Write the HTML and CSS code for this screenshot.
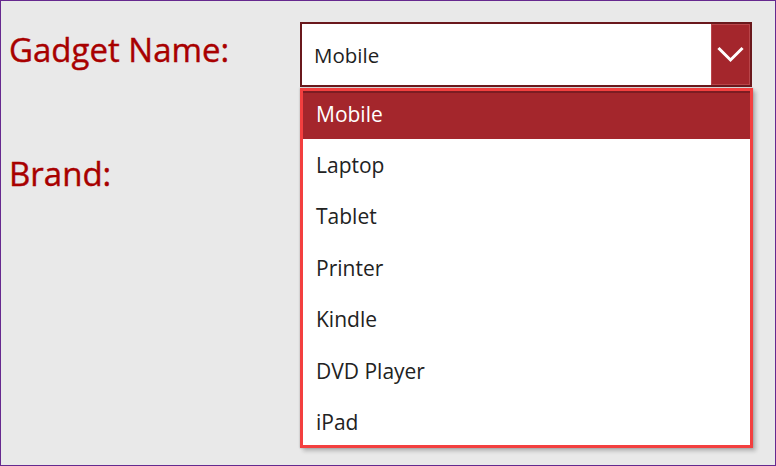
FILE: index.html
```html
<!DOCTYPE html>
<html>
<head>
<meta charset="utf-8">
<link rel="stylesheet" href="styles.css">
</head>
<body>
<div class="frame">
  <div class="form">
    <div class="label label-first">Gadget Name:</div>
    <div class="dropdown">
      <div class="select">
        <span class="value">Mobile</span>
        <span class="chev">
          <svg width="39" height="61" viewBox="0 0 39 61"><polyline points="8.5,25 19.5,36 30.5,25" fill="none" stroke="#fff" stroke-width="3" stroke-linecap="square"/></svg>
        </span>
      </div>
      <ul class="menu">
        <li class="item selected">Mobile</li>
        <li class="item">Laptop</li>
        <li class="item">Tablet</li>
        <li class="item">Printer</li>
        <li class="item">Kindle</li>
        <li class="item">DVD Player</li>
        <li class="item">iPad</li>
      </ul>
    </div>
    <div class="label label-second">Brand:</div>
  </div>
</div>
</body>
</html>
```
FILE: styles.css
```css
html, body {
  margin: 0;
  padding: 0;
}
body {
  width: 776px;
  height: 466px;
  overflow: hidden;
  font-family: "Open Sans", "Noto Sans", sans-serif;
}
.frame {
  box-sizing: border-box;
  width: 776px;
  height: 466px;
  border: 1px solid #66298f;
  background: #e9e9e9;
  padding-top: 21px;
}
.form {
  display: grid;
  grid-template-columns: 299px 452px;
  grid-template-rows: 65px auto;
}
.label {
  color: #a80000;
  font-size: 33px;
  line-height: 40px;
  padding-left: 8px;
  -webkit-text-stroke: 0.4px #a80000;
}
.label-first {
  margin-top: 8px;
}
.label-second {
  grid-column: 1;
  grid-row: 2;
  margin-top: 67px;
}
.dropdown {
  position: relative;
  grid-column: 2;
  grid-row: 1;
}
.select {
  box-sizing: border-box;
  height: 65px;
  border: 2px solid #6a181c;
  background: #fff;
  display: flex;
  align-items: center;
}
.value {
  flex: 1;
  padding-left: 12px;
  font-size: 20.5px;
  color: #1e1e1e;
}
.chev {
  width: 39px;
  height: 61px;
  background: #a4262c;
  box-shadow: inset 0 0 0 1px #b9454a;
  display: flex;
}
.menu {
  position: absolute;
  left: 0;
  top: 66px;
  width: 453px;
  margin: 0;
  padding: 0;
  list-style: none;
  background: #fff;
  outline: 3px solid #f33f3f;
  outline-offset: -3px;
  box-shadow: 0 0 2px rgba(0,0,0,0.25), 3px 3px 4px rgba(0,0,0,0.22);
}
.item {
  height: 51.4px;
  display: flex;
  align-items: center;
  padding-left: 16px;
  font-size: 21px;
  color: #222;
}
.item.selected {
  background: #a4262c;
  color: #fff;
  box-shadow: inset 0 5px 0 #7d1c22;
}
```
